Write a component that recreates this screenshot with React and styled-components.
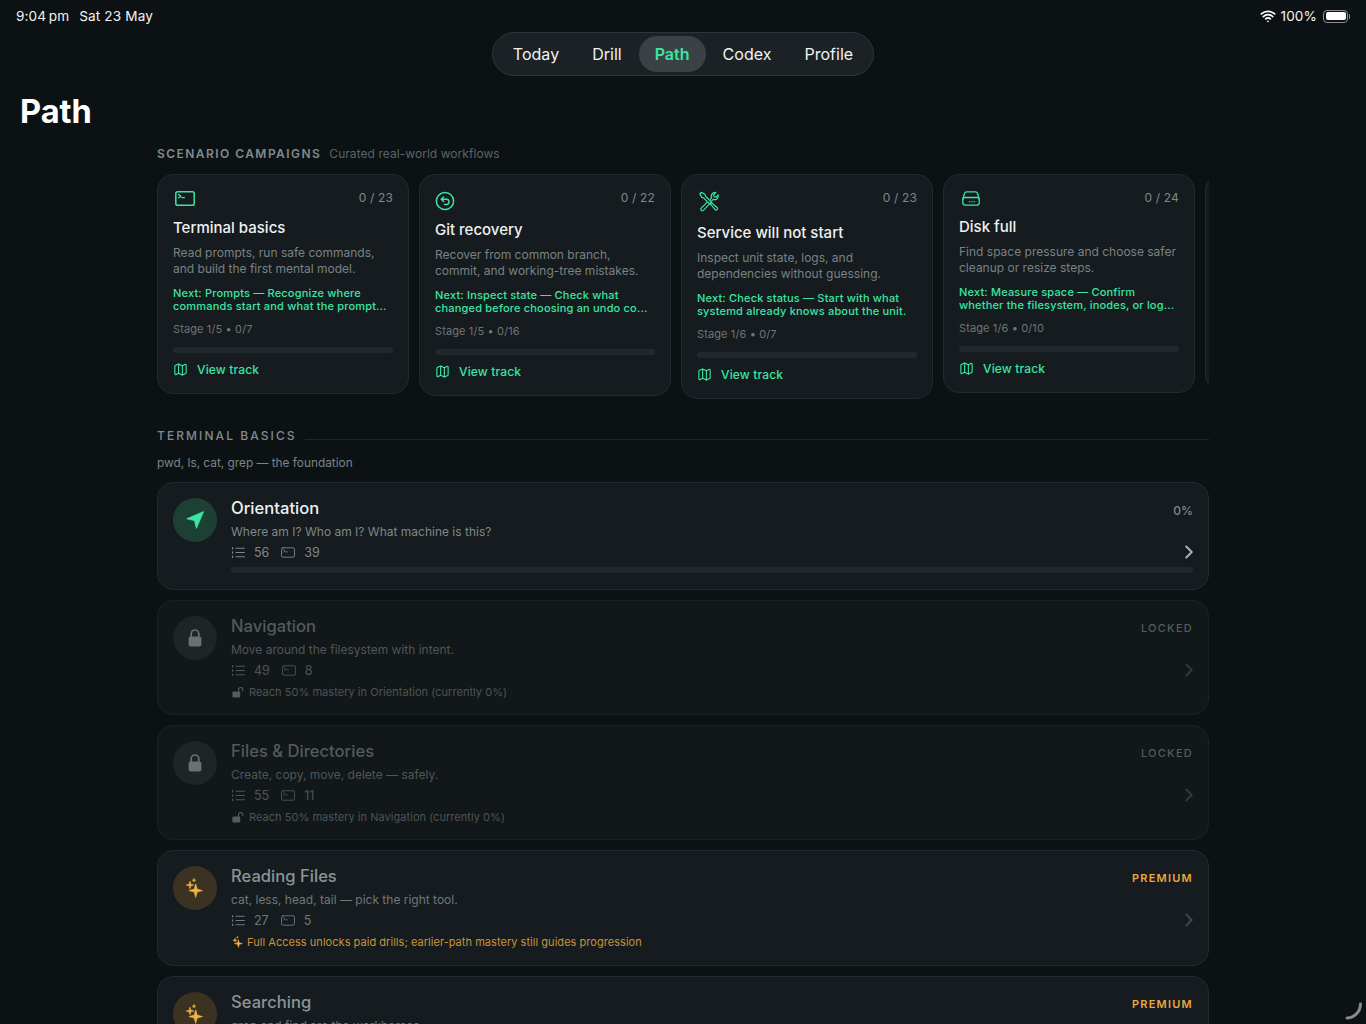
import React from "react";
import styled, { createGlobalStyle } from "styled-components";
import { Map as MapIcon, ChevronRight, Wifi } from "lucide-react";

const GREEN = "#3ae6a4";
const AMBER = "#e9a93f";

const Global = createGlobalStyle`
  html, body { margin: 0; padding: 0; height: 1024px; overflow: hidden; background: #0c1113; }
  #root { height: 1024px; overflow: hidden; }
  * { box-sizing: border-box; }
  body { font-family: Inter, "Liberation Sans", sans-serif; -webkit-font-smoothing: antialiased; }
`;

const Page = styled.div`
  position: relative;
  width: 1366px;
  height: 1024px;
  overflow: hidden;
  background: #0c1113;
  color: #eef1f1;
`;
const Status = styled.div`
  height: 32px;
  padding: 0 16px;
  display: flex;
  align-items: center;
  justify-content: space-between;
  font-size: 13.6px;
  color: #f2f4f4;
  letter-spacing: 0.12px;
`;
const StatusGroup = styled.div`
  display: flex;
  align-items: center;
  gap: ${(p) => p.$gap || 10}px;
`;
const Battery = styled.div`
  width: 25px;
  height: 13px;
  border: 1px solid #8b8f90;
  border-radius: 4px;
  padding: 1.5px;
  margin-left: 2px;
  margin-right: 2px;
  position: relative;
  &::before { content: ""; display: block; height: 100%; background: #fff; border-radius: 2px; }
  &::after { content: ""; position: absolute; right: -3px; top: 3px; width: 1.5px; height: 5px; background: #8b8f90; border-radius: 1px; }
`;
const NavWrap = styled.div`
  display: flex;
  justify-content: center;
`;
const Nav = styled.nav`
  display: flex;
  align-items: center;
  gap: 1px;
  height: 44px;
  padding: 0 4px;
  background: #1b2124;
  border: 1px solid #2e3639;
  border-radius: 22px;
`;
const NavItem = styled.div`
  height: 36px;
  padding: 0 16px;
  display: flex;
  align-items: center;
  border-radius: 18px;
  font-size: 16.05px;
  font-weight: ${(p) => (p.$active ? 600 : 400)};
  color: ${(p) => (p.$active ? GREEN : "#f0f2f2")};
  background: ${(p) => (p.$active ? "#3a4245" : "transparent")};
`;
const Title = styled.h1`
  margin: 15px 0 0 20px;
  font-size: 32.6px;
  line-height: 40px;
  font-weight: 700;
  color: #fff;
`;
const Main = styled.main`
  width: 1052px;
  margin-left: 157px;
`;
const Head = styled.div`
  display: flex;
  align-items: center;
  height: 16px;
  margin-top: ${(p) => p.$top}px;
  gap: 8px;
`;
const Kicker = styled.span`
  font-size: 12px;
  font-weight: ${(p) => p.$weight};
  letter-spacing: ${(p) => p.$spacing}px;
  color: #818b8d;
  white-space: nowrap;
`;
const HeadNote = styled.span`
  font-size: 12px;
  letter-spacing: 0.05px;
  color: #5b6466;
`;
const HeadLine = styled.span`
  flex: 1;
  height: 1px;
  margin-top: 9px;
  background: #1f2729;
`;
const Track = styled.div`
  display: flex;
  gap: 10px;
  align-items: flex-start;
  height: 225px;
  margin-top: 13px;
  overflow: hidden;
`;
const Card = styled.article`
  flex: 0 0 252px;
  width: 252px;
  min-width: 0;
  min-height: 217px;
  overflow: hidden;
  padding: 13px 15px 15px;
  background: #151b1e;
  border: 1px solid #222a2d;
  border-radius: 16px;
`;
const CardTop = styled.div`
  display: flex;
  justify-content: space-between;
  align-items: flex-start;
  height: ${(p) => p.$slot}px;
  margin-bottom: 6px;
  svg { display: block; margin-top: 3px; color: ${GREEN}; }
`;
const Count = styled.span`
  font-size: 12px;
  line-height: 20px;
  letter-spacing: 0.15px;
  color: #7f8889;
`;
const CardTitle = styled.h3`
  margin: 0;
  font-size: 15px;
  line-height: 22px;
  font-weight: 500;
  color: #eef1f1;
`;
const CardDesc = styled.p`
  margin: 6px 0 0;
  font-size: 12px;
  line-height: 16px;
  color: #7a8284;
`;
const CardNext = styled.p`
  margin: 10px 0 0;
  font-size: 11px;
  line-height: 13px;
  font-weight: 500;
  letter-spacing: 0.18px;
  color: ${GREEN};
`;
const Line = styled.span`
  display: block;
  white-space: nowrap;
`;
const Stage = styled.div`
  margin-top: 8px;
  font-size: 11px;
  line-height: 16px;
  letter-spacing: 0.12px;
  color: #6e7678;
`;
const Bar = styled.div`
  height: 6px;
  border-radius: 3px;
  background: #202a2c;
  margin-top: ${(p) => p.$top}px;
  margin-bottom: ${(p) => p.$bottom || 0}px;
`;
const ViewTrack = styled.div`
  display: flex;
  align-items: center;
  gap: 9px;
  margin-top: 7px;
  height: 18px;
  font-size: 12px;
  font-weight: 500;
  letter-spacing: 0.15px;
  color: ${GREEN};
`;
const Sub = styled.div`
  margin-top: 12px;
  font-size: 11.85px;
  line-height: 16px;
  color: #7b8486;
`;
const Rows = styled.div`
  display: flex;
  flex-direction: column;
  gap: 10px;
  margin-top: 11px;
`;
const Row = styled.section`
  display: flex;
  gap: 14px;
  padding: 13px 15px ${(p) => (p.$kind === "premium" ? 15 : 14)}px;
  background: ${(p) => (p.$kind === "locked" ? "#121719" : "#151b1e")};
  border: 1px solid ${(p) => (p.$kind === "locked" ? "#1b2224" : "#222a2d")};
  border-radius: 16px;
`;
const Circle = styled.div`
  flex: 0 0 44px;
  height: 44px;
  margin-top: 2px;
  border-radius: 50%;
  display: flex;
  align-items: center;
  justify-content: center;
  background: ${(p) => ({ open: "#1d4035", locked: "#1f2527", premium: "#3b3222" }[p.$kind])};
`;
const Body = styled.div`
  flex: 1;
  min-width: 0;
`;
const RowHead = styled.div`
  display: flex;
  justify-content: space-between;
  align-items: center;
  height: 24px;
`;
const RowTitle = styled.h3`
  margin: 0;
  font-size: 16.6px;
  font-weight: 500;
  color: ${(p) => ({ open: "#eef1f1", locked: "#545a5c", premium: "#8b9596" }[p.$kind])};
`;
const Tag = styled.span`
  font-size: ${(p) => (p.$plain ? 12 : 11)}px;
  font-weight: ${(p) => (p.$kind === "premium" ? 600 : 500)};
  letter-spacing: ${(p) => (p.$plain ? 0 : 1.25)}px;
  margin-top: 4px;
  color: ${(p) => ({ open: "#7f8889", locked: "#565c5e", premium: AMBER }[p.$kind])};
`;
const RowDesc = styled.p`
  margin: 4px 0 0;
  font-size: 12px;
  line-height: 16px;
  color: ${(p) => ({ open: "#7f8889", locked: "#505658", premium: "#6f797a" }[p.$kind])};
`;
const Meta = styled.div`
  display: flex;
  align-items: center;
  justify-content: space-between;
  height: 16px;
  margin-top: 4px;
  color: ${(p) => ({ open: "#7f8889", locked: "#4f5557", premium: "#6f797a" }[p.$kind])};
`;
const Stats = styled.div`
  display: flex;
  align-items: center;
  margin-left: 1px;
  font-size: 12.5px;
  svg { display: block; }
`;
const StatNum = styled.span`
  margin: 0 12px 0 9px;
`;
const Chevron = styled(ChevronRight)`
  display: block;
  flex: none;
  margin-right: -7px;
  color: ${(p) => ({ open: "#a9b2b3", locked: "#33393b", premium: "#3f4648" }[p.$kind])};
`;
const Note = styled.div`
  display: flex;
  align-items: center;
  gap: ${(p) => (p.$kind === "premium" ? 3 : 5)}px;
  height: 16px;
  margin-top: 6px;
  margin-left: 1px;
  font-size: 11px;
  letter-spacing: 0.04px;
  color: ${(p) => (p.$kind === "premium" ? "#c99339" : "#4e5456")};
`;
const Spinner = styled.svg`
  position: absolute;
  right: 4px;
  bottom: 4px;
`;

const TermIcon = ({ w = 20, h = 15, sw = 1.5, left = 0, color = "currentColor" }) => (
  <svg width={w} height={h} viewBox="0 0 20 15" fill="none" stroke={color} strokeWidth={sw} strokeLinecap="round" strokeLinejoin="round" style={{ marginLeft: left }}>
    <rect x="0.8" y="0.8" width="18.4" height="13.4" rx="1.8" />
    <path d="M3.6 3.6 L6 5.2 L3.6 6.8 M6.8 6.6 H9.4" strokeWidth={sw * 0.85} />
  </svg>
);
const UndoIcon = () => (
  <svg width="20" height="20" viewBox="0 0 20 20" fill="none" stroke="currentColor" strokeWidth="1.5" strokeLinecap="round" strokeLinejoin="round">
    <circle cx="10" cy="10" r="8.6" />
    <path d="M8.6 6 L6.2 8.2 L8.6 10.4 M6.4 8.2 H11.4 A2.6 2.6 0 0 1 11.4 13.4 H9.4" />
  </svg>
);
const ToolsIcon = () => (
  <svg width="22" height="21" viewBox="0 0 23 23" fill="none" stroke="currentColor" strokeWidth="1.3" strokeLinecap="round" strokeLinejoin="round" style={{ marginLeft: 1 }}>
    <path d="M1.4 3.2 L3.2 1.4 L7 3.6 L8 6 L14.6 12.6 L12.6 14.6 L6 8 L3.6 7 Z" />
    <path d="M13.4 12.2 L20.6 18.4 A1.6 1.6 0 0 1 18.4 20.6 L12.2 13.4" />
    <path d="M9.6 12.2 L3 18.8 A1.7 1.7 0 0 0 5.4 21.2 L11.6 14.6" />
    <path d="M12.8 9 L14.4 7.4 A4.2 4.2 0 0 1 15.4 2.6 A4.2 4.2 0 0 1 19 1.6 L16.4 4.2 L17 6.2 L19 6.8 L21.6 4.2 A4.2 4.2 0 0 1 16 9.2 L14.6 10.6" />
  </svg>
);
const DiskIcon = () => (
  <svg width="20" height="15" viewBox="0 0 21 17" fill="none" stroke="currentColor" strokeWidth="1.5" strokeLinecap="round" strokeLinejoin="round" style={{ marginLeft: 2 }}>
    <path d="M5.4 1 H15.6 A2.4 2.4 0 0 1 17.8 2.6 L19.8 9 V13.4 A2.6 2.6 0 0 1 17.2 16 H3.8 A2.6 2.6 0 0 1 1.2 13.4 V9 L3.2 2.6 A2.4 2.4 0 0 1 5.4 1 Z" />
    <path d="M1.4 9 A2.4 2.4 0 0 1 3.8 7.4 H17.2 A2.4 2.4 0 0 1 19.6 9" />
    <path d="M8 12 H15.5" strokeDasharray="1 1" strokeLinecap="butt" strokeWidth="1.6" />
  </svg>
);
const ListIcon = () => (
  <svg width="13" height="11" viewBox="0 0 13 11" fill="none" stroke="currentColor" strokeWidth="1.1" strokeLinecap="round">
    <path d="M4 1.2 H12.4 M4 5.5 H12.4 M4 9.8 H12.4" />
    <path d="M0.6 0.6 V2 M0.6 4.8 V6.2 M0.6 9 V10.4" strokeWidth="1.2" />
  </svg>
);
const Arrow = () => (
  <svg width="18" height="18" viewBox="0 0 18 18">
    <path d="M17.6 0.6 L0.8 7.8 L8.4 9.6 L10.4 17.4 Z" fill={GREEN} stroke={GREEN} strokeWidth="0.8" strokeLinejoin="round" />
  </svg>
);
const LockFill = () => (
  <svg width="14" height="18" viewBox="0 0 14 18">
    <path d="M3.2 8 V4.8 A3.8 3.8 0 0 1 10.8 4.8 V8" fill="none" stroke="#6b7072" strokeWidth="1.7" />
    <rect x="0.6" y="7.4" width="12.8" height="10" rx="2" fill="#6b7072" />
  </svg>
);
const OpenLock = () => (
  <svg width="12" height="12" viewBox="0 0 12 12">
    <path d="M6.6 6 V3.6 A2.1 2.1 0 0 1 10.8 3.6 V4.6" fill="none" stroke="#565c5e" strokeWidth="1.1" strokeLinecap="round" />
    <rect x="0.4" y="5.4" width="7.8" height="6.2" rx="1.3" fill="#565c5e" />
  </svg>
);
const star = (x, y, r) => {
  const k = r * 0.22;
  return `M${x} ${y - r} L${x + k} ${y - k} L${x + r} ${y} L${x + k} ${y + k} L${x} ${y + r} L${x - k} ${y + k} L${x - r} ${y} L${x - k} ${y - k} Z`;
};
const Sparkles = ({ size = 20 }) => (
  <svg width={size} height={size} viewBox="0 0 20 20" fill="#f3b440" stroke="#f3b440" strokeWidth="0.6" strokeLinejoin="round">
    <path d={star(10.7, 12.6, 6.8)} />
    <path d={star(5, 7, 3.8)} />
    <path d={star(9, 2.2, 1.8)} />
  </svg>
);

const cards = [
  { slot: 23, icon: <TermIcon left={2} />, count: "0 / 23", title: "Terminal basics", desc: ["Read prompts, run safe commands,", "and build the first mental model."], next: ["Next: Prompts — Recognize where", "commands start and what the prompt..."], stage: "Stage 1/5 • 0/7" },
  { slot: 25, icon: <UndoIcon />, count: "0 / 22", title: "Git recovery", desc: ["Recover from common branch,", "commit, and working-tree mistakes."], next: ["Next: Inspect state — Check what", "changed before choosing an undo co..."], stage: "Stage 1/5 • 0/16" },
  { slot: 28, icon: <ToolsIcon />, count: "0 / 23", title: "Service will not start", desc: ["Inspect unit state, logs, and", "dependencies without guessing."], next: ["Next: Check status — Start with what", "systemd already knows about the unit."], stage: "Stage 1/6 • 0/7" },
  { slot: 22, icon: <DiskIcon />, count: "0 / 24", title: "Disk full", desc: ["Find space pressure and choose safer", "cleanup or resize steps."], next: ["Next: Measure space — Confirm", "whether the filesystem, inodes, or log..."], stage: "Stage 1/6 • 0/10" },
];

const rows = [
  { kind: "open", title: "Orientation", desc: "Where am I? Who am I? What machine is this?", a: 56, b: 39, tag: "0%" },
  { kind: "locked", title: "Navigation", desc: "Move around the filesystem with intent.", a: 49, b: 8, tag: "LOCKED", note: "Reach 50% mastery in Orientation (currently 0%)" },
  { kind: "locked", title: "Files & Directories", desc: "Create, copy, move, delete — safely.", a: 55, b: 11, tag: "LOCKED", note: "Reach 50% mastery in Navigation (currently 0%)" },
  { kind: "premium", title: "Reading Files", desc: "cat, less, head, tail — pick the right tool.", a: 27, b: 5, tag: "PREMIUM", note: "Full Access unlocks paid drills; earlier-path mastery still guides progression" },
  { kind: "premium", title: "Searching", desc: "grep and find are the workhorses.", a: 31, b: 6, tag: "PREMIUM", note: "Full Access unlocks paid drills; earlier-path mastery still guides progression" },
];

const navItems = ["Today", "Drill", "Path", "Codex", "Profile"];

export default function App() {
  return (
    <Page>
      <Global />
      <Status>
        <StatusGroup>
          <span>9:04{"\u2009"}pm</span>
          <span>Sat 23 May</span>
        </StatusGroup>
        <StatusGroup $gap={4}>
          <Wifi size={16} strokeWidth={2.6} color="#fff" />
          <span>100%</span>
          <Battery />
        </StatusGroup>
      </Status>
      <NavWrap>
        <Nav>
          {navItems.map((n) => (
            <NavItem key={n} $active={n === "Path"}>{n}</NavItem>
          ))}
        </Nav>
      </NavWrap>
      <Title>Path</Title>
      <Main>
        <Head $top={14}>
          <Kicker $weight={600} $spacing={1.45}>SCENARIO CAMPAIGNS</Kicker>
          <HeadNote>Curated real-world workflows</HeadNote>
        </Head>
        <Track>
          {cards.map((c) => (
            <Card key={c.title}>
              <CardTop $slot={c.slot}>
                {c.icon}
                <Count>{c.count}</Count>
              </CardTop>
              <CardTitle>{c.title}</CardTitle>
              <CardDesc>{c.desc.map((l) => <Line key={l}>{l}</Line>)}</CardDesc>
              <CardNext>{c.next.map((l) => <Line key={l}>{l}</Line>)}</CardNext>
              <Stage>{c.stage}</Stage>
              <Bar $top={10} />
              <ViewTrack>
                <MapIcon size={15} strokeWidth={1.8} />
                View track
              </ViewTrack>
            </Card>
          ))}
          <Card />
        </Track>
        <Head $top={28}>
          <Kicker $weight={500} $spacing={2.07}>TERMINAL BASICS</Kicker>
          <HeadLine />
        </Head>
        <Sub>pwd, ls, cat, grep — the foundation</Sub>
        <Rows>
          {rows.map((r) => (
            <Row key={r.title} $kind={r.kind}>
              <Circle $kind={r.kind}>
                {r.kind === "open" && <Arrow />}
                {r.kind === "locked" && <LockFill />}
                {r.kind === "premium" && <Sparkles />}
              </Circle>
              <Body>
                <RowHead>
                  <RowTitle $kind={r.kind}>{r.title}</RowTitle>
                  <Tag $kind={r.kind} $plain={r.kind === "open"}>{r.tag}</Tag>
                </RowHead>
                <RowDesc $kind={r.kind}>{r.desc}</RowDesc>
                <Meta $kind={r.kind}>
                  <Stats>
                    <ListIcon />
                    <StatNum>{r.a}</StatNum>
                    <TermIcon w={14} h={11} sw={1.3} />
                    <StatNum>{r.b}</StatNum>
                  </Stats>
                  <Chevron $kind={r.kind} size={22} strokeWidth={2.2} />
                </Meta>
                {r.kind === "open" && <Bar $top={7} $bottom={2} />}
                {r.note && (
                  <Note $kind={r.kind}>
                    {r.kind === "locked" ? <OpenLock /> : <Sparkles size={12} />}
                    {r.note}
                  </Note>
                )}
              </Body>
            </Row>
          ))}
        </Rows>
      </Main>
      <Spinner width="18" height="18" viewBox="0 0 18 18" fill="none">
        <path d="M16.5 2 A14 14 0 0 1 3 16" stroke="#8a8a8a" strokeWidth="3" strokeLinecap="round" />
      </Spinner>
    </Page>
  );
}
